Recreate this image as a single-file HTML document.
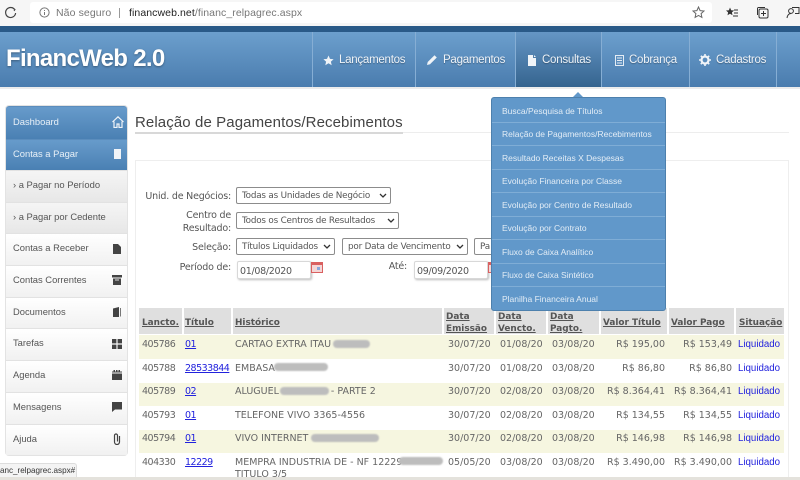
<!DOCTYPE html>
<html lang="pt-BR">
<head>
<meta charset="utf-8">
<title>FinancWeb 2.0</title>
<style>
html,body{margin:0;padding:0;width:800px;height:480px;overflow:hidden;background:#fff}
body{position:relative;font-family:"DejaVu Sans","Liberation Sans",sans-serif;color:#555}
.a{position:absolute;white-space:nowrap}
#chrome{left:0;top:0;width:800px;height:26px;background:#f6f6f6}
#addr{left:30px;top:2px;width:682px;height:21px;background:#fff;border-radius:3px}
#stripe{left:0;top:26px;width:800px;height:6px;background:#2a5a88}
#hdr{left:0;top:32px;width:800px;height:55px;background:linear-gradient(#6c9fcd,#4a7cae)}
#under{left:0;top:87px;width:800px;height:2px;background:#ececec}
.sep{top:32px;width:1px;height:55px;background:#86aed4}
.nav{top:54px;font:11.5px "Liberation Sans",sans-serif;color:#eef3f8;letter-spacing:-.25px;text-shadow:0 1px 1px rgba(0,0,0,.3)}
.side{left:6px;width:121px;border-top:1px solid #e2e2e2;background:linear-gradient(#fff,#f1f1f1);font:9.4px/28px "Liberation Sans",sans-serif;color:#555;text-indent:7px;box-sizing:border-box}
.side.blue{background:linear-gradient(#679bcb,#4a80b3);color:#e8f0f7;border-top:1px solid #5b8dbd}
.side.sub{background:linear-gradient(#f5f5f5,#e7e7e7)}
.lab{font:9.5px "DejaVu Sans",sans-serif;color:#555;text-align:right;letter-spacing:-.2px}
.sel{height:17px;border:1px solid #8c8c8c;border-radius:2px;background:#fff;font:8.8px/16px "DejaVu Sans",sans-serif;letter-spacing:-.2px;color:#555;padding-left:5px;box-sizing:border-box;overflow:hidden}
.sel svg{position:absolute;right:3px;top:5px}
.inp{height:18px;border:1px solid #d8d8d8;border-radius:2px;background:#fff;box-shadow:1px 1px 2px #bbb;font:9.5px/20px "DejaVu Sans",sans-serif;letter-spacing:-.3px;color:#555;padding-left:2px;box-sizing:border-box}
.hc{top:308px;height:26px;background:#dfdfdf;font:bold 8.9px/12px "DejaVu Sans",sans-serif;color:#555;text-decoration:underline;box-sizing:border-box;padding-left:3px;white-space:nowrap}
.hc.s{line-height:30px}
.hc.t{padding-top:3px}
.row{left:139px;width:645px}
.c{font:9.5px "DejaVu Sans",sans-serif;color:#666}
.n{letter-spacing:-.5px}
.l{font:9.5px "DejaVu Sans",sans-serif;color:#2222dd;text-decoration:underline;letter-spacing:-.5px}
.liq{font:9.7px "Liberation Sans",sans-serif;color:#2222dd;left:738px}
.r{text-align:right}
.blur{background:#bdbdbd;border-radius:5px;height:8px;filter:blur(.7px)}
#menu{left:491px;top:97px;width:175px;height:214px;background:#6198ca;border:1px solid #4d80ad;border-radius:3px;box-sizing:border-box}
.mi{position:absolute;left:0;width:173px;height:1px;background:#7fadd6}
.mt{left:502px;font:8.5px "Liberation Sans",sans-serif;color:#e3edf6}
</style>
</head>
<body>
<div class="a" id="chrome"></div>
<svg class="a" style="left:3px;top:5px" width="15" height="15" viewBox="0 0 15 15"><path d="M11.6 4.500A5 5 0 1 0 12.600 8" fill="none" stroke="#444" stroke-width="1.2"/><path d="M9 2.500l3 2-1 1.500" fill="none" stroke="#444" stroke-width="1"/></svg>
<div class="a" id="addr"></div>
<svg class="a" style="left:39px;top:7px" width="11" height="11" viewBox="0 0 11 11"><circle cx="5.500" cy="5.500" r="4.600" fill="none" stroke="#777"/><path d="M5.500 5v3M5.500 3v1" stroke="#777"/></svg>
<div class="a" style="left:56px;top:7px;font:10.5px 'Liberation Sans',sans-serif;color:#777;letter-spacing:.1px">Não seguro</div>
<div class="a" style="left:119px;top:8px;width:1px;height:10px;background:#999"></div>
<div class="a" style="left:129px;top:7px;font:10.5px 'Liberation Sans',sans-serif;color:#777;letter-spacing:.08px"><span style="color:#222">financweb.net</span>/financ_relpagrec.aspx</div>
<svg class="a" style="left:692px;top:6px" width="13" height="13" viewBox="0 0 13 13"><path d="M6.500 1l1.600 3.600 3.900.4-2.900 2.600.8 3.800-3.400-2-3.400 2 .8-3.800L1 5l3.900-.4z" fill="none" stroke="#666"/></svg>
<svg class="a" style="left:725px;top:6px" width="14" height="13" viewBox="0 0 14 13"><path d="M5 1.500l1.200 2.700 2.900.3-2.200 1.900.6 2.900L5 7.800 2.500 9.300l.6-2.900L1 4.500l2.900-.3z" fill="#333"/><path d="M9 4h4M9 7h4M8 10h5" stroke="#333"/></svg>
<svg class="a" style="left:756px;top:6px" width="14" height="14" viewBox="0 0 14 14"><rect x="3" y="3" width="9" height="9" rx="1.500" fill="none" stroke="#333"/><path d="M1.500 9V2.500a1 1 0 0 1 1-1H9M7.500 5v5M5 7.500h5" fill="none" stroke="#333"/></svg>
<svg class="a" style="left:786px;top:6px" width="14" height="14" viewBox="0 0 14 14"><circle cx="5" cy="5" r="2.400" fill="none" stroke="#333"/><path d="M1 12c.5-3 2-4.500 4-4.500M6 1.500h7v6H9" fill="none" stroke="#333"/></svg>

<div class="a" id="stripe"></div>
<div class="a" id="hdr"></div>
<div class="a" id="under"></div>
<div class="a" style="left:515px;top:32px;width:86px;height:55px;background:linear-gradient(#6596c5,#35648f)"></div>
<div class="a" style="left:6px;top:45px;font:bold 24px 'Liberation Sans',sans-serif;color:#fff;letter-spacing:-.7px;text-shadow:0 1px 2px rgba(0,0,0,.35)">FinancWeb 2.0</div>
<div class="a sep" style="left:312px"></div>
<div class="a sep" style="left:415px"></div>
<div class="a sep" style="left:515px"></div>
<div class="a sep" style="left:601px"></div>
<div class="a sep" style="left:689px"></div>
<div class="a sep" style="left:776px"></div>
<svg class="a" style="left:323px;top:55px" width="11" height="11" viewBox="0 0 11 11"><path d="M5.500 .5l1.500 3.400 3.600.3-2.700 2.400.8 3.600-3.200-1.900-3.200 1.900.8-3.600L.4 4.200 4 3.900z" fill="#f0f4f8"/></svg>
<div class="a nav" style="left:339px">Lançamentos</div>
<svg class="a" style="left:426px;top:54px" width="12" height="12" viewBox="0 0 12 12"><path d="M1 11l.7-3L8.500 1.200l2.300 2.300L4 10.300z" fill="#f0f4f8"/></svg>
<div class="a nav" style="left:443px">Pagamentos</div>
<svg class="a" style="left:528px;top:55px" width="9" height="11" viewBox="0 0 9 11"><path d="M0 0h5v3h3v8H0zM6 0l2 2H6z" fill="#f0f4f8"/></svg>
<div class="a nav" style="left:542px">Consultas</div>
<svg class="a" style="left:615px;top:55px" width="9" height="11" viewBox="0 0 9 11"><path d="M.5 .5h8v10h-8z" fill="none" stroke="#e4ecf4"/><path d="M2 3h5M2 5.500h5M2 8h5" stroke="#e4ecf4"/></svg>
<div class="a nav" style="left:629px">Cobrança</div>
<svg class="a" style="left:699px;top:54px" width="12" height="12" viewBox="0 0 12 12"><circle cx="6" cy="6" r="3.500" fill="none" stroke="#f0f4f8" stroke-width="2.200"/><path d="M6 0v12M0 6h12M1.800 1.800l8.400 8.400M10.200 1.800l-8.400 8.400" stroke="#f0f4f8" stroke-width="1.600" stroke-dasharray="2 8"/></svg>
<div class="a nav" style="left:716px">Cadastros</div>

<!-- sidebar -->
<div class="a" style="left:6px;top:106px;width:121px;height:349px;border-radius:3px;box-shadow:0 0 0 1px #e3e3e3"></div>
<div class="a side blue" style="top:106px;height:33px;line-height:29px;border-radius:3px 3px 0 0">Dashboard</div>
<div class="a side blue" style="top:139px;height:31px">Contas a Pagar</div>
<div class="a side sub" style="top:170px;height:32px">› a Pagar no Período</div>
<div class="a side sub" style="top:202px;height:31px">› a Pagar por Cedente</div>
<div class="a side" style="top:233px;height:32px">Contas a Receber</div>
<div class="a side" style="top:265px;height:32px">Contas Correntes</div>
<div class="a side" style="top:297px;height:31px">Documentos</div>
<div class="a side" style="top:328px;height:32px">Tarefas</div>
<div class="a side" style="top:360px;height:32px">Agenda</div>
<div class="a side" style="top:392px;height:32px">Mensagens</div>
<div class="a side" style="top:424px;height:31px">Ajuda</div>
<svg class="a" style="left:112px;top:116px" width="12" height="12" viewBox="0 0 12 12"><path d="M.5 6L6 .8 11.500 6M2 5.500V11.500h3V8h2v3.500h3V5.500" fill="none" stroke="#f0f4f8" stroke-width="1.200"/></svg>
<div class="a" style="left:114px;top:149px;width:7px;height:10px;background:#f0f4f8"></div>
<svg class="a" style="left:113px;top:244px" width="8" height="10" viewBox="0 0 8 10"><path d="M0 0h5l3 3v7H0z" fill="#444"/></svg>
<svg class="a" style="left:112px;top:275px" width="10" height="10" viewBox="0 0 10 10"><path d="M0 0h10v2.500H0zM1 3.500h8V10H1z" fill="#444"/><path d="M3 5h4" stroke="#ddd"/></svg>
<svg class="a" style="left:113px;top:307px" width="8" height="10" viewBox="0 0 8 10"><path d="M0 1.500L6 0v10H0z" fill="#444"/><path d="M7 1v8.500h1V1z" fill="#777"/></svg>
<svg class="a" style="left:112px;top:339px" width="10" height="10" viewBox="0 0 10 10"><path d="M0 0h4.400v4.400H0zM5.600 0H10v4.400H5.600zM0 5.600h4.400V10H0zM5.600 5.600H10V10H5.600z" fill="#444"/></svg>
<svg class="a" style="left:112px;top:370px" width="10" height="10" viewBox="0 0 10 10"><path d="M0 3.500h10V10H0zM0 1.500h1.500V0h1.500v1.500h1V0h1.500v1.500h1V0h1.500v1.500H10v1H0z" fill="#444"/></svg>
<svg class="a" style="left:112px;top:402px" width="10" height="10" viewBox="0 0 10 10"><path d="M0 0h10v7.500H3L0 10z" fill="#444"/></svg>
<svg class="a" style="left:113px;top:433px" width="8" height="12" viewBox="0 0 8 12"><path d="M6.500 3v6a2.500 2.500 0 0 1-5 0V2.500a1.500 1.500 0 0 1 3 0V8.500" fill="none" stroke="#444" stroke-width="1.200"/></svg>

<!-- title -->
<div class="a" style="left:135px;top:114px;font:15px 'Liberation Sans',sans-serif;color:#444;letter-spacing:.1px">Relação de Pagamentos/Recebimentos</div>
<div class="a" style="left:135px;top:132px;width:654px;height:1px;background:#ededed"></div>
<div class="a" style="left:135px;top:132px;width:268px;height:2px;background:#d8d8d8"></div>
<div class="a" style="left:135px;top:160px;width:654px;height:320px;border:1px solid #eee;border-bottom:0;box-sizing:border-box"></div>

<!-- form -->
<div class="a lab" style="left:140px;top:191px;width:91px">Unid. de Negócios:</div>
<div class="a sel" style="left:236px;top:187px;width:155px">Todas as Unidades de Negócio<svg width="8" height="6" viewBox="0 0 8 6"><path d="M1 1l3 3 3-3" fill="none" stroke="#333" stroke-width="1.300"/></svg></div>
<div class="a lab" style="left:140px;top:210px;width:91px">Centro de</div>
<div class="a lab" style="left:140px;top:223px;width:91px">Resultado:</div>
<div class="a sel" style="left:236px;top:212px;width:163px">Todos os Centros de Resultados<svg width="8" height="6" viewBox="0 0 8 6"><path d="M1 1l3 3 3-3" fill="none" stroke="#333" stroke-width="1.300"/></svg></div>
<div class="a lab" style="left:140px;top:242px;width:91px">Seleção:</div>
<div class="a sel" style="left:236px;top:238px;width:99px">Títulos Liquidados<svg width="8" height="6" viewBox="0 0 8 6"><path d="M1 1l3 3 3-3" fill="none" stroke="#333" stroke-width="1.300"/></svg></div>
<div class="a sel" style="left:342px;top:238px;width:126px">por Data de Vencimento<svg width="8" height="6" viewBox="0 0 8 6"><path d="M1 1l3 3 3-3" fill="none" stroke="#333" stroke-width="1.300"/></svg></div>
<div class="a sel" style="left:474px;top:238px;width:40px">Pa</div>
<div class="a lab" style="left:140px;top:262px;width:91px">Período de:</div>
<div class="a inp" style="left:237px;top:261px;width:74px">01/08/2020</div>
<svg class="a" style="left:311px;top:262px" width="12" height="11" viewBox="0 0 12 11"><rect x=".5" y=".5" width="11" height="10" fill="#f4d6d6" stroke="#d96060"/><path d="M1 1h10v2H1z" fill="#d96060"/><rect x="6" y="5" width="3" height="3" fill="#88a8dd"/></svg>
<div class="a lab" style="left:370px;top:261px;width:37px">Até:</div>
<div class="a inp" style="left:414px;top:261px;width:74px">09/09/2020</div>
<svg class="a" style="left:488px;top:262px" width="12" height="11" viewBox="0 0 12 11"><rect x=".5" y=".5" width="11" height="10" fill="#f4d6d6" stroke="#d96060"/><path d="M1 1h10v2H1z" fill="#d96060"/></svg>

<!-- table header -->
<div class="a hc s" style="left:139px;width:43px">Lancto.</div>
<div class="a hc s" style="left:184px;width:47px;padding-left:1px">Título</div>
<div class="a hc s" style="left:233px;width:209px;padding-left:2px">Histórico</div>
<div class="a hc t" style="left:444px;width:50px;padding-left:2px">Data<br>Emissão</div>
<div class="a hc t" style="left:496px;width:50px;padding-left:2px">Data<br>Vencto.</div>
<div class="a hc t" style="left:548px;width:51px;padding-left:2px">Data<br>Pagto.</div>
<div class="a hc s" style="left:601px;width:66px;padding-left:2px">Valor Título</div>
<div class="a hc s" style="left:669px;width:65px;padding-left:2px">Valor Pago</div>
<div class="a hc s" style="left:736px;width:48px">Situação</div>

<!-- rows -->
<div class="a row" style="top:335px;height:24px;background:#f6f6e0"></div>
<div class="a row" style="top:383px;height:23px;background:#f6f6e0"></div>
<div class="a row" style="top:430px;height:23px;background:#f6f6e0"></div>

<div class="a c n" style="left:142px;top:339px">405786</div><div class="a l" style="left:185px;top:339px">01</div><div class="a c" style="left:235px;top:339px">CARTAO EXTRA ITAU</div><div class="a blur" style="left:333px;top:340px;width:37px"></div><div class="a c" style="left:448px;top:339px">30/07/20</div><div class="a c" style="left:500px;top:339px">01/08/20</div><div class="a c" style="left:552px;top:339px">03/08/20</div><div class="a c r" style="left:600px;top:339px;width:65px">R$ 195,00</div><div class="a c r" style="left:667px;top:339px;width:65px">R$ 153,49</div><div class="a liq" style="top:339px">Liquidado</div>

<div class="a c n" style="left:142px;top:363px">405788</div><div class="a l" style="left:185px;top:363px">28533844</div><div class="a c" style="left:235px;top:363px">EMBASA</div><div class="a blur" style="left:274px;top:363px;width:54px"></div><div class="a c" style="left:448px;top:363px">30/07/20</div><div class="a c" style="left:500px;top:363px">01/08/20</div><div class="a c" style="left:552px;top:363px">03/08/20</div><div class="a c r" style="left:600px;top:363px;width:65px">R$ 86,80</div><div class="a c r" style="left:667px;top:363px;width:65px">R$ 86,80</div><div class="a liq" style="top:363px">Liquidado</div>

<div class="a c n" style="left:142px;top:386px">405789</div><div class="a l" style="left:185px;top:386px">02</div><div class="a c" style="left:235px;top:386px">ALUGUEL <span style="display:inline-block;width:46px"></span> - PARTE 2</div><div class="a blur" style="left:280px;top:387px;width:49px"></div><div class="a c" style="left:448px;top:386px">30/07/20</div><div class="a c" style="left:500px;top:386px">02/08/20</div><div class="a c" style="left:552px;top:386px">03/08/20</div><div class="a c r" style="left:600px;top:386px;width:65px">R$ 8.364,41</div><div class="a c r" style="left:667px;top:386px;width:65px">R$ 8.364,41</div><div class="a liq" style="top:386px">Liquidado</div>

<div class="a c n" style="left:142px;top:410px">405793</div><div class="a l" style="left:185px;top:410px">01</div><div class="a c" style="left:235px;top:410px">TELEFONE VIVO 3365-4556</div><div class="a c" style="left:448px;top:410px">30/07/20</div><div class="a c" style="left:500px;top:410px">02/08/20</div><div class="a c" style="left:552px;top:410px">03/08/20</div><div class="a c r" style="left:600px;top:410px;width:65px">R$ 134,55</div><div class="a c r" style="left:667px;top:410px;width:65px">R$ 134,55</div><div class="a liq" style="top:410px">Liquidado</div>

<div class="a c n" style="left:142px;top:433px">405794</div><div class="a l" style="left:185px;top:433px">01</div><div class="a c" style="left:235px;top:433px">VIVO INTERNET</div><div class="a blur" style="left:311px;top:434px;width:68px"></div><div class="a c" style="left:448px;top:433px">30/07/20</div><div class="a c" style="left:500px;top:433px">02/08/20</div><div class="a c" style="left:552px;top:433px">03/08/20</div><div class="a c r" style="left:600px;top:433px;width:65px">R$ 146,98</div><div class="a c r" style="left:667px;top:433px;width:65px">R$ 146,98</div><div class="a liq" style="top:433px">Liquidado</div>

<div class="a c n" style="left:142px;top:457px">404330</div><div class="a l" style="left:185px;top:457px">12229</div><div class="a c" style="left:235px;top:457px">MEMPRA INDUSTRIA DE - NF 12229</div><div class="a blur" style="left:399px;top:457px;width:44px"></div><div class="a c" style="left:235px;top:469px">TITULO 3/5</div><div class="a c" style="left:448px;top:457px">05/05/20</div><div class="a c" style="left:500px;top:457px">03/08/20</div><div class="a c" style="left:552px;top:457px">03/08/20</div><div class="a c r" style="left:600px;top:457px;width:65px">R$ 3.490,00</div><div class="a c r" style="left:667px;top:457px;width:65px">R$ 3.490,00</div><div class="a liq" style="top:457px">Liquidado</div>

<!-- dropdown -->
<div class="a" style="left:573px;top:92px;width:0;height:0;border-left:5px solid transparent;border-right:5px solid transparent;border-bottom:5px solid #6198ca"></div>
<div class="a" id="menu">
<div class="mi" style="top:24px"></div><div class="mi" style="top:47px"></div><div class="mi" style="top:71px"></div><div class="mi" style="top:94px"></div><div class="mi" style="top:118px"></div><div class="mi" style="top:141px"></div><div class="mi" style="top:165px"></div><div class="mi" style="top:188px"></div>
</div>
<div class="a mt" style="top:106px">Busca/Pesquisa de Títulos</div>
<div class="a mt" style="top:129px">Relação de Pagamentos/Recebimentos</div>
<div class="a mt" style="top:153px">Resultado Receitas X Despesas</div>
<div class="a mt" style="top:176px">Evolução Financeira por Classe</div>
<div class="a mt" style="top:200px">Evolução por Centro de Resultado</div>
<div class="a mt" style="top:223px">Evolução por Contrato</div>
<div class="a mt" style="top:247px">Fluxo de Caixa Analítico</div>
<div class="a mt" style="top:270px">Fluxo de Caixa Sintético</div>
<div class="a mt" style="top:294px">Planilha Financeira Anual</div>

<!-- status bubble -->
<div class="a" style="left:0;top:463px;width:77px;height:15px;background:#f4f4f4;border:1px solid #ddd;border-left:0;border-bottom:0;border-radius:0 3px 0 0;box-sizing:border-box;font:8.1px/14px 'Liberation Sans',sans-serif;color:#333;overflow:hidden">anc_relpagrec.aspx#</div>
<div class="a" style="left:0;top:477px;width:800px;height:3px;background:#e4e2dc"></div>
</body>
</html>
